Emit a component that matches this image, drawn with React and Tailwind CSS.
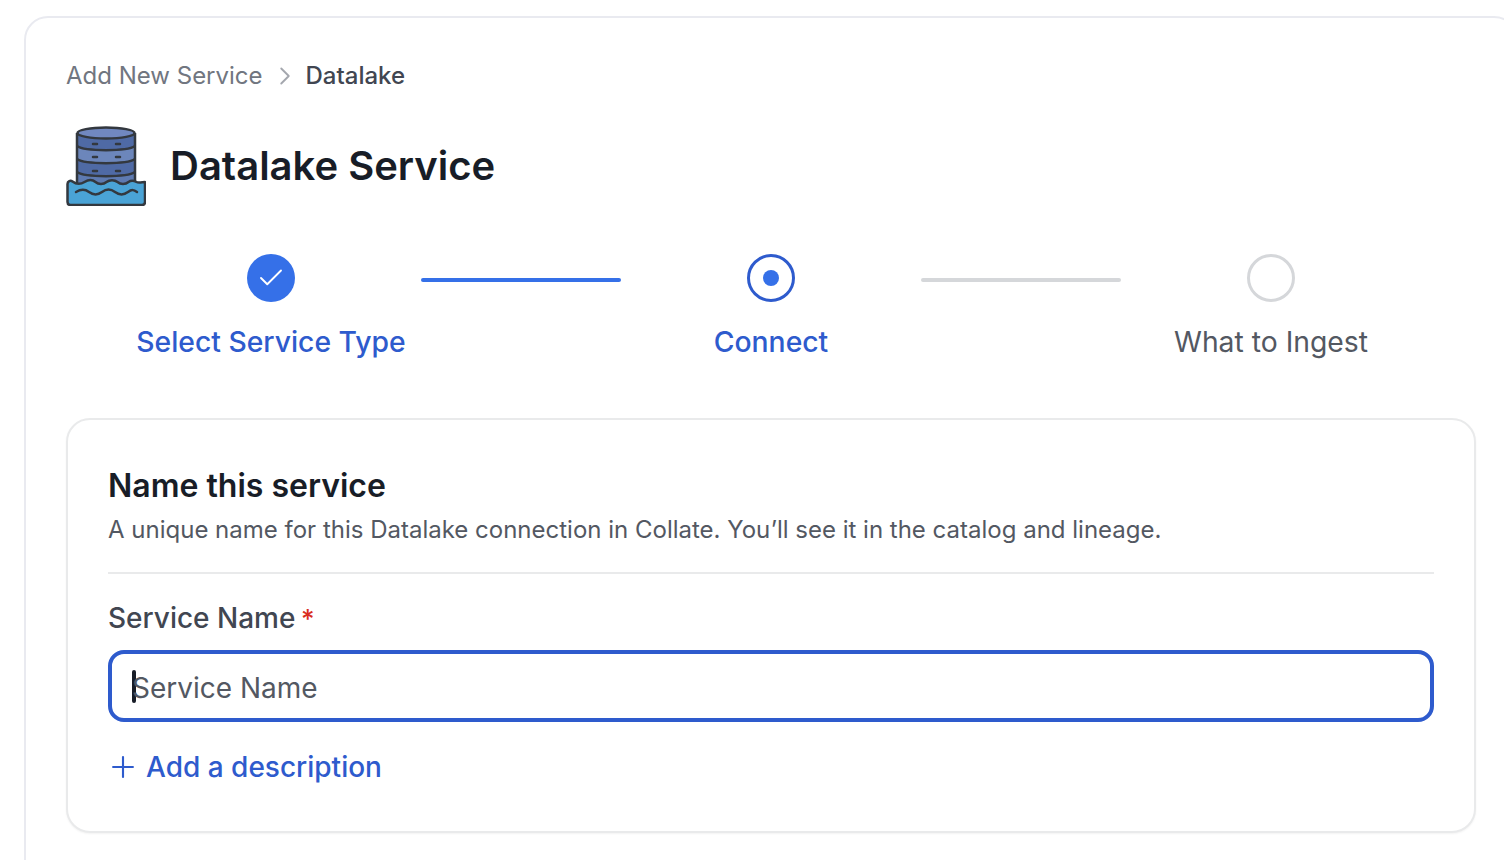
import { Check, ChevronRight, Plus } from "lucide-react";

const DatalakeIcon = () => (
  <svg width="80" height="80" viewBox="0 0 80 80" className="shrink-0">
    <path d="M11 6v60h58V6z" fill="#4f6aa5" />
    <path d="M11 20c8 5.500 50 5.500 58 0v13c-8 5.500-50 5.500-58 0z" fill="#6c86bb" />
    <path d="M11 46c8 5.500 50 5.500 58 0v13H11z" fill="#6c86bb" opacity="0.55" />
    <ellipse cx="40" cy="7" rx="28.5" ry="5.5" fill="#7188c0" stroke="#33383f" strokeWidth="2.5" />
    <path d="M11 7v56M69 7v56" stroke="#33383f" strokeWidth="2.5" fill="none" />
    <path d="M11 20c8 5.500 50 5.500 58 0M11 33c8 5.500 50 5.500 58 0M11 46c8 5.500 50 5.500 58 0" stroke="#33383f" strokeWidth="2.500" fill="none" />
    <path d="M27 18h4M50 18h4M27 31h4M50 31h4M27 45h4M50 45h4" stroke="#33383f" strokeWidth="2.500" strokeLinecap="round" />
    <path d="M1.500 58c0-3 3-4 5-2.500 4 3 8 3 12 .5s8-2.500 11 0 8 2.500 11 0 8-2.500 11 0 8 2.500 11 0c3-2 5-1.500 8 0 2 1 6 0 8.500 0v20c0 2-1 3-3 3H4.500c-2 0-3-1-3-3z" fill="#4aa3d6" stroke="#33383f" strokeWidth="2.500" strokeLinejoin="round" />
    <path d="M10 66c5-3 9-3 13 0s9 3 13 0 9-3 13 0 9 3 13 0 6-2 9 0" stroke="#33383f" strokeWidth="2.500" fill="none" strokeLinecap="round" />
  </svg>
);

const Step = ({ label, state }) => (
  <div className="flex w-[300px] flex-col items-center">
    {state === "done" && (
      <div className="flex h-12 w-12 items-center justify-center rounded-full bg-[#3570e8]">
        <Check className="h-[30px] w-[30px] text-white" strokeWidth={1.5} />
      </div>
    )}
    {state === "active" && (
      <div className="flex h-12 w-12 items-center justify-center rounded-full border-[3px] border-[#2e5bcd]">
        <div className="h-4 w-4 rounded-full bg-[#3570e8]" />
      </div>
    )}
    {state === "todo" && (
      <div className="h-12 w-12 rounded-full border-[3px] border-[#d5d7da]" />
    )}
    <p
      className={`mt-[22px] text-[28.3px] leading-[36px] ${
        state === "todo" ? "text-[#535862]" : "font-medium text-[#2e5bcd]"
      }`}
    >
      {label}
    </p>
  </div>
);

const App = () => {
  return (
    <div className="h-[860px] w-[1504px] overflow-hidden bg-white pl-6 pt-4 font-['Inter',sans-serif]">
      <div className="h-[900px] w-[1494px] rounded-[24px] border-2 border-[#e9eaf0] bg-white px-10 pt-[42px]">
        <div className="flex items-center text-[24px] leading-[32px]">
          <span className="text-[#717680]">Add New Service</span>
          <ChevronRight className="ml-[7px] mr-[6px] h-[30px] w-[30px] text-[#a4a7ae]" strokeWidth={1.5} />
          <span className="font-medium text-[#414651]">Datalake</span>
        </div>

        <div className="mt-[34px] flex items-center gap-6">
          <DatalakeIcon />
          <h1 className="text-[40px] font-semibold leading-[48px] text-[#181d27]">Datalake Service</h1>
        </div>

        <div className="mt-[48px] flex justify-center">
          <Step label="Select Service Type" state="done" />
          <div className="mt-[24px] h-1 w-[200px] rounded-full bg-[#3570e8]" />
          <Step label="Connect" state="active" />
          <div className="mt-[24px] h-1 w-[200px] rounded-full bg-[#d5d7da]" />
          <Step label="What to Ingest" state="todo" />
        </div>

        <div className="mt-[58px] w-[1410px] rounded-[24px] border-2 border-[#e9eaeb] bg-white px-10 pb-[42px] pt-[44px] shadow-xs">
          <h2 className="text-[32px] font-semibold leading-[44px] text-[#181d27]">Name this service</h2>
          <p className="mt-[4px] text-[24px] leading-[36px] text-[#535862]">
            A unique name for this Datalake connection in Collate. You’ll see it in the catalog and lineage.
          </p>
          <div className="mt-[24px] h-[2px] bg-[#e9eaeb]" />
          <label className="mt-[22px] block text-[28px] font-medium leading-[44px] text-[#414651]">
            Service Name <span className="-ml-[2px] text-[26px] text-[#d92d20]">*</span>
          </label>
          <div className="mt-[9px] flex h-[72px] items-center rounded-[16px] border-4 border-[#2e5bcd] bg-white px-5">
            <div className="h-[33px] w-1 rounded-sm bg-[#181d27]" />
            <span className="-ml-1 pt-[3px] text-[28px] text-[#535862]">Service Name</span>
          </div>
          <div className="mt-[23px] flex items-center gap-[6px] text-[#2e5bcd]">
            <Plus className="-ml-[2px] h-[34px] w-[34px]" strokeWidth={1.5} />
            <span className="text-[28px] font-medium leading-[44px]">Add a description</span>
          </div>
        </div>
      </div>
    </div>
  );
};

export default App;
